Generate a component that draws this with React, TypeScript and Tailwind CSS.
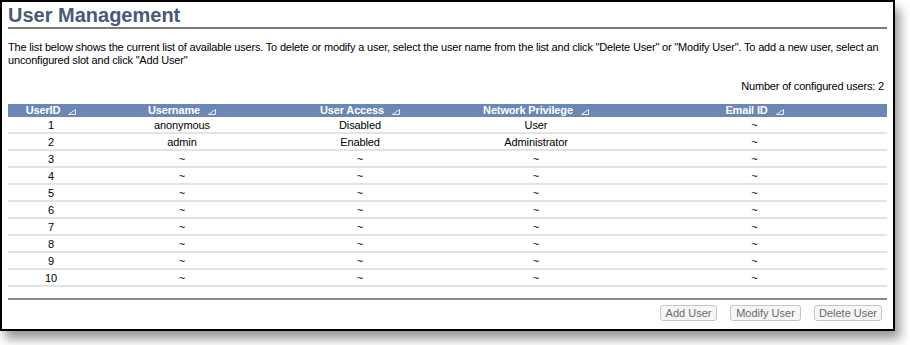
import React from "react";

type UserRow = {
  id: number;
  name: string;
  access: string;
  privilege: string;
  email: string;
};

const users: UserRow[] = Array.from({ length: 10 }, (_, i) => {
  if (i === 0)
    return { id: 1, name: "anonymous", access: "Disabled", privilege: "User", email: "~" };
  if (i === 1)
    return { id: 2, name: "admin", access: "Enabled", privilege: "Administrator", email: "~" };
  return { id: i + 1, name: "~", access: "~", privilege: "~", email: "~" };
});

const columns = ["UserID", "Username", "User Access", "Network Privilege", "Email ID"];

const gridCols = "grid grid-cols-[86px_176px_180px_172px_1fr]";

// small sort marker next to each header label
const SortMark = () => (
  <svg width="8" height="7" viewBox="0 0 8 7" className="ml-[8px] mt-[1px]">
    <path d="M0.5 6.5 L7.5 6.5 L7.5 1.5 Z" stroke="#e8eef8" strokeWidth="1" fill="none" strokeLinejoin="miter" />
  </svg>
);

const Button = ({ label, width }: { label: string; width: string }) => (
  <button
    className={`h-[16px] ${width} rounded-[3px] border border-[#c6c6c6] bg-[#f6f6f6] text-[11px] leading-none text-[#6a6a6a]`}
  >
    {label}
  </button>
);

export default function App() {
  return (
    <div className="h-[345px] w-[910px] bg-white font-['Liberation_Sans',Arial,sans-serif]">
      <div className="flex h-[331px] w-[895px] flex-col border-2 border-black bg-white px-[6px] pt-[2px] shadow-[5px_8px_10px_rgba(0,0,0,0.4)]">
        {/* Title */}
        <h1 className="border-b-2 border-[#7a7a7a] text-[20px] font-bold leading-[23px] text-[#4b5878]">
          User Management
        </h1>

        <p className="mt-[12px] text-[11px] leading-[13px] tracking-[-0.18px] text-black">
          The list below shows the current list of available users. To delete or modify a user, select the user
          name from the list and click "Delete User" or "Modify User". To add a new user, select an unconfigured
          slot and click "Add User"
        </p>

        <p className="mt-[13px] pr-[3px] text-right text-[11px] leading-[13px] tracking-[-0.18px] text-black">
          Number of configured users: 2
        </p>

        {/* Table */}
        <div className="mt-[11px]">
          <div className={`${gridCols} h-[13px] bg-[#6b87b6]`}>
            {columns.map((c) => (
              <div
                key={c}
                className="flex items-center justify-center text-[11px] font-bold leading-none tracking-[-0.15px] text-white"
              >
                {c}
                <SortMark />
              </div>
            ))}
          </div>
          {users.map((u) => (
            <div
              key={u.id}
              className={`${gridCols} h-[17px] border-b-2 border-[#e3e3e3] text-center text-[11px] leading-[16px] tracking-[-0.1px] text-black`}
            >
              <div>{u.id}</div>
              <div>{u.name}</div>
              <div>{u.access}</div>
              <div>{u.privilege}</div>
              <div>{u.email}</div>
            </div>
          ))}
        </div>

        <div className="mt-[11px] border-t-2 border-[#8a8a8a]" />

        <div className="mt-[5px] flex justify-end gap-[13px] pr-[5px]">
          <Button label="Add User" width="w-[57px]" />
          <Button label="Modify User" width="w-[71px]" />
          <Button label="Delete User" width="w-[68px]" />
        </div>
      </div>
    </div>
  );
}
